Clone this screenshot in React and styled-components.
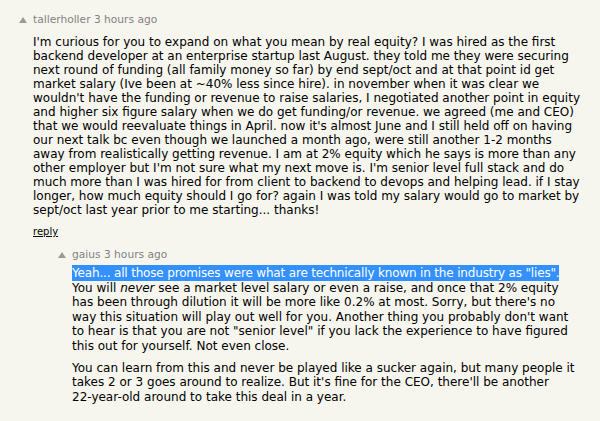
import React from "react";
import styled, { createGlobalStyle } from "styled-components";

const Global = createGlobalStyle`
  html, body { margin: 0; padding: 0; background: #f6f6ef; }
  body { font-family: "DejaVu Sans", Verdana, sans-serif; }
  ::selection { background: #3390ff; color: #fff; }
`;

const Page = styled.div`
  width: 600px;
  height: 421px;
  background: #f6f6ef;
  box-sizing: border-box;
  padding-top: 14px;
  overflow: hidden;
`;

const Comment = styled.div`
  display: flex;
  align-items: flex-start;
  padding-left: ${(p) => p.$indent}px;
  margin-bottom: ${(p) => p.$gap || 0}px;
`;

const Vote = styled.div`
  width: 14px;
  flex: none;
  padding-top: 3px;
  display: flex;
`;

const Arrow = styled.span`
  width: 0;
  height: 0;
  border-left: 4px solid transparent;
  border-right: 4px solid transparent;
  border-bottom: 6px solid #9a9a9a;
`;

const Body = styled.div`
  flex: 1;
  min-width: 0;
  font-size: 12px;
  line-height: 14px;
`;

const Head = styled.div`
  color: #828282;
  font-size: 10.67px;
  line-height: 12px;
  margin-bottom: ${(p) => p.$mb}px;
`;

const Text = styled.div`
  color: #000;
  font-size: 12px;
  line-height: ${(p) => p.$lh}px;
  white-space: nowrap;
`;

const Para = styled.p`
  margin: 0;
  & + & { margin-top: 7px; }
`;

const Highlight = styled.span`
  background: #3390ff;
  color: #fff;
  padding: 1px 0;
  letter-spacing: -0.17px;
`;

const Reply = styled.a`
  display: block;
  width: fit-content;
  margin-top: 9px;
  font-size: 10px;
  line-height: 12px;
  color: #000;
  text-decoration: underline;
`;

const Lines = ({ lines }) =>
  lines.map((l, i) => (
    <React.Fragment key={i}>
      {l}
      {i < lines.length - 1 && <br />}
    </React.Fragment>
  ));

export default function App() {
  return (
    <Page>
      <Global />
      <Comment $indent={19} $gap={11}>
        <Vote><Arrow /></Vote>
        <Body>
          <Head $mb={9}>tallerholler 3 hours ago</Head>
          <Text $lh={14}>
            <Para>
              <Lines
                lines={[
                  "I'm curious for you to expand on what you mean by real equity? I was hired as the first",
                  "backend developer at an enterprise startup last August. they told me they were securing",
                  "next round of funding (all family money so far) by end sept/oct and at that point id get",
                  "market salary (Ive been at ~40% less since hire). in november when it was clear we",
                  "wouldn't have the funding or revenue to raise salaries, I negotiated another point in equity",
                  "and higher six figure salary when we do get funding/or revenue. we agreed (me and CEO)",
                  "that we would reevaluate things in April. now it's almost June and I still held off on having",
                  "our next talk bc even though we launched a month ago, were still another 1-2 months",
                  "away from realistically getting revenue. I am at 2% equity which he says is more than any",
                  "other employer but I'm not sure what my next move is. I'm senior level full stack and do",
                  "much more than I was hired for from client to backend to devops and helping lead. if I stay",
                  "longer, how much equity should I go for? again I was told my salary would go to market by",
                  "sept/oct last year prior to me starting... thanks!",
                ]}
              />
            </Para>
          </Text>
          <Reply href="#">reply</Reply>
        </Body>
      </Comment>
      <Comment $indent={58}>
        <Vote><Arrow /></Vote>
        <Body>
          <Head $mb={5}>gaius 3 hours ago</Head>
          <Text $lh={14.6}>
            <Para>
              <Highlight>Yeah... all those promises were what are technically known in the industry as "lies".</Highlight>
              <br />
              You will <i>never</i> see a market level salary or even a raise, and once that 2% equity
              <br />
              <Lines
                lines={[
                  "has been through dilution it will be more like 0.2% at most. Sorry, but there's no",
                  "way this situation will play out well for you. Another thing you probably don't want",
                  "to hear is that you are not \"senior level\" if you lack the experience to have figured",
                  "this out for yourself. Not even close.",
                ]}
              />
            </Para>
            <Para>
              <Lines
                lines={[
                  "You can learn from this and never be played like a sucker again, but many people it",
                  "takes 2 or 3 goes around to realize. But it's fine for the CEO, there'll be another",
                  "22-year-old around to take this deal in a year.",
                ]}
              />
            </Para>
          </Text>
        </Body>
      </Comment>
    </Page>
  );
}
